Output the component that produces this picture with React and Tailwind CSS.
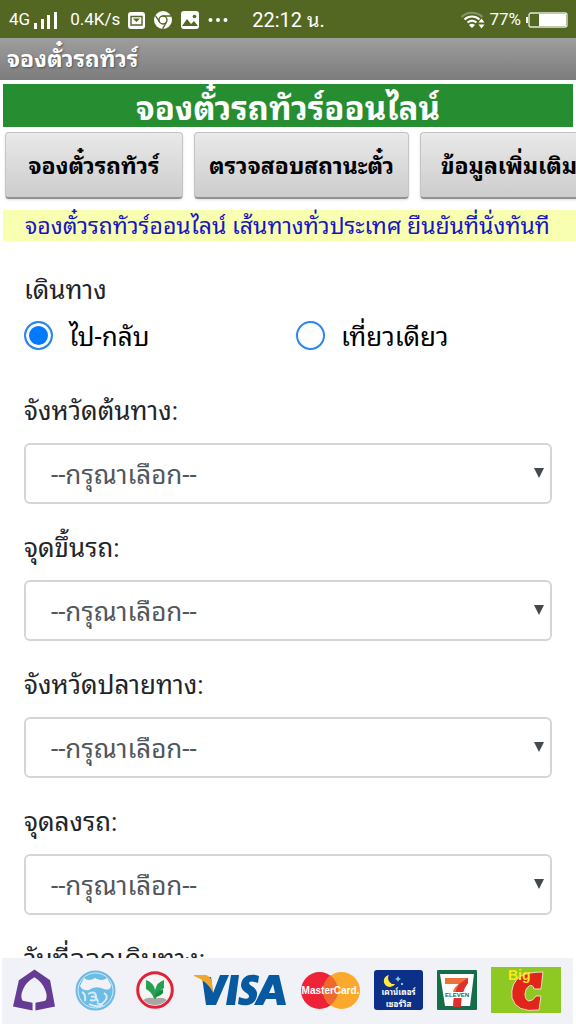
import React, { useState } from 'react';

// ── data ─────────────────────────────────────────────────────────────────────

const menu = [
  { label: 'จองตั๋วรถทัวร์', width: 'w-[178px]' },
  { label: 'ตรวจสอบสถานะตั๋ว', width: 'w-[215px]' },
  { label: 'ข้อมูลเพิ่มเติม', width: 'w-[178px]' },
];

const fields = [
  { id: 'origin', label: 'จังหวัดต้นทาง:' },
  { id: 'pickup', label: 'จุดขึ้นรถ:' },
  { id: 'destination', label: 'จังหวัดปลายทาง:' },
  { id: 'dropoff', label: 'จุดลงรถ:' },
];

const trips = [
  { id: 'round', label: 'ไป-กลับ' },
  { id: 'oneway', label: 'เที่ยวเดียว' },
];

// ── status bar ───────────────────────────────────────────────────────────────

const StatusBar = () => (
  <div className="flex h-[38px] shrink-0 items-center bg-[#536723] pl-[9px] pr-2 pt-0.5 text-[17px] text-white">
    <span className="text-[17px]">4G</span>
    <svg className="ml-1 h-[18px] w-6" viewBox="0 0 24 18" fill="#fff">
      <rect x="0" y="12" width="3" height="6" />
      <rect x="7" y="8" width="3" height="10" />
      <rect x="13" y="4" width="3" height="14" />
      <rect x="20" y="1" width="3" height="17" />
    </svg>
    <span className="ml-3">0.4K/s</span>
    <svg className="ml-2 size-[17px]" viewBox="0 0 17 17">
      <rect width="17" height="17" rx="3" fill="#fff" />
      <path d="M3 4.500h11v8.500H3z" fill="none" stroke="#536723" strokeWidth="1.4" />
      <path d="M5 6.500h7L8.500 10z" fill="#536723" />
    </svg>
    <svg className="ml-[9px] size-[18px]" viewBox="0 0 18 18">
      <circle cx="9" cy="9" r="9" fill="#fff" />
      <circle cx="9" cy="9" r="4" fill="none" stroke="#536723" strokeWidth="1.4" />
      <path d="M9 5h8M5.5 11L1.4 4.5M12.5 11L8.6 17.8" stroke="#536723" strokeWidth="1.4" />
    </svg>
    <svg className="ml-[9px] size-[18px]" viewBox="0 0 18 18">
      <rect width="18" height="18" rx="3" fill="#fff" />
      <path d="M1 15l5-7 4 5 3-3 4 5z" fill="#536723" />
      <circle cx="13.5" cy="5.5" r="1.8" fill="#536723" />
    </svg>
    <svg className="ml-[9px] h-1 w-5" viewBox="0 0 20 4" fill="#fff">
      <circle cx="2.5" cy="2" r="2" />
      <circle cx="10" cy="2" r="2" />
      <circle cx="17.5" cy="2" r="2" />
    </svg>
    <span className="ml-6 text-[20px]">22:12 น.</span>
    <svg className="ml-auto h-[18px] w-6" viewBox="0 0 24 18" fill="none" strokeWidth="2" stroke="#fff">
      <path d="M0.5 6a15 15 0 0 1 21 0" opacity=".3" />
      <path d="M3.5 8.5a11 11 0 0 1 15 0M6.5 11.5a7 7 0 0 1 9 0" />
      <path d="M8 14a4.500 4.500 0 0 1 6 0l-3 3z" fill="#fff" stroke="none" />
      <path d="M20.500 7.500l3 4h-6zM20.500 17.500l3-4h-6z" fill="#fff" stroke="none" />
    </svg>
    <span className="ml-1">77%</span>
    <svg className="ml-[5px] h-4 w-[42px]" viewBox="0 0 42 16">
      <rect x="0" y="5" width="2" height="6" fill="#fff" />
      <rect x="3" y="1" width="38" height="14" rx="2" fill="none" stroke="#e5e9da" strokeWidth="1.3" />
      <rect x="13" y="2" width="27" height="12" fill="#fff" />
    </svg>
  </div>
);

// ── payment partners ─────────────────────────────────────────────────────────

const Partners = () => (
  <footer className="ml-0.5 mr-[3px] flex h-[66px] shrink-0 items-center gap-5 bg-[#f0f2f7] pb-0.5 pl-[11px]">
    <div className="flex items-center gap-5">
      <svg className="h-[42px] w-[42px]" viewBox="0 0 43 42" role="img" aria-label="SCB">
        <path
          fillRule="evenodd"
          fill="#653b94"
          d="M22 0L38 11L43 38L23 42V34L33 32Q36 28 33 21Q30 13 22 8Q13 13 10 21Q7 28 10 32L20 34V42L0 38L6 11z"
        />
      </svg>
      <svg className="size-[41px]" viewBox="0 0 41 41" role="img" aria-label="Krungthai">
        <circle cx="20.500" cy="20.500" r="19" fill="#6dbce5" stroke="#6dbce5" strokeWidth="2" />
        <circle cx="20.500" cy="20.500" r="17.500" fill="none" stroke="#d5eaf6" strokeWidth="1" />
        <path d="M9 8Q14 12 20 8Q27 12 32 8L36 15Q36 21 29 19Q20 15 14 20Q7 21 5 16z" fill="#f0f2f7" />
        <path d="M7 22Q11 24 10 31M13 24q7-4 8 2t-6 4M16 27q5-2 7 5M29 23q5 3 1 8t-8 2M14 34q7 4 14 1" fill="none" stroke="#d8ecf7" strokeWidth="2" />
      </svg>
      <svg className="size-[38px]" viewBox="0 0 38 38" role="img" aria-label="Kasikorn">
        <circle cx="19" cy="19" r="17.300" fill="#f7f5f5" stroke="#df2438" strokeWidth="3" />
        <path d="M7 29Q13 25 19 28Q26 25 31 29Q26 34 19 34Q12 34 7 29z" fill="#aaa6a5" />
        <path d="M18 28Q16 21 10 18V9Q18 12 19 19Q21 11 28 9V17Q21 20 20 28z" fill="#27a052" />
        <path d="M19 24q2-4 8-6v4q-4 4-8 4z" fill="#168e3e" />
      </svg>
    </div>
    <div className="flex items-center gap-3.5">
      <svg className="h-10 w-[93px]" viewBox="0 0 93 40" role="img" aria-label="Visa">
        <g fill="#075a9f">
          <path d="M8 7h9l2 16L26 5h9L22 35H12z" />
          <path d="M37 5h8l-4 30h-9z" />
          <path d="M65 6l-1 7q-9-3-9 0c0 3 9 4 8 12c-1 10-11 12-19 9l1-7q10 4 10-1c0-3-8-4-8-11c1-10 10-12 18-9z" />
          <path fillRule="evenodd" d="M75 5h10l7 30h-9l-1-6H72l-3 6H60zM79 14l-4 9h6z" />
        </g>
        <path d="M0 5h12q5 1 6 8l1 9Q13 11 0 6z" fill="#f3a62c" />
      </svg>
      <svg className="h-[39px] w-[59px]" viewBox="0 0 59 39">
        <circle cx="18.500" cy="19.500" r="18.500" fill="#ee2338" />
        <circle cx="40.500" cy="19.500" r="18.500" fill="#fba92c" />
        <path d="M29.500 4.600a18.500 18.500 0 0 1 0 29.800a18.500 18.500 0 0 1 0-29.800" fill="#ed692e" />
        <text x="29.500" y="23" textAnchor="middle" fill="#fff" className="font-['Liberation_Sans',sans-serif] text-[10px] font-bold">MasterCard.</text>
      </svg>
      <svg className="h-10 w-[49px]" viewBox="0 0 49 40">
        <rect width="49" height="40" rx="3" fill="#0c2f87" />
        <path d="M15 5a6 6 0 1 0 6 9a6 6 0 0 1-6-9" fill="#ffeb3d" />
        <path d="M24 6l1 2 2 1-2 1-1 2-1-2-2-1 2-1zM27 13h2v2h-2z" fill="#87cce5" />
        <text x="24.500" y="25" textAnchor="middle" fill="#fff" className="text-[8px] font-bold">เคาน์เตอร์</text>
        <text x="24.500" y="37" textAnchor="middle" fill="#fff" className="text-[8px] font-bold">เซอร์วิส</text>
      </svg>
      <svg className="size-10" viewBox="0 0 40 40">
        <rect width="40" height="40" rx="1" fill="#146e49" />
        <path d="M3 4h34l-4 32H8z" fill="#fff" />
        <path d="M8 8h23v5q-7 7-7 9h-8q1-5 6-8H8z" fill="#ed713d" />
        <path d="M22 14L31 8v5q-7 9-7 24h-8q0-13 6-23z" fill="#de3030" />
        <rect x="7" y="22" width="26" height="6" fill="#fff" />
        <text x="20" y="27" textAnchor="middle" fill="#146e49" className="font-['Liberation_Sans',sans-serif] text-[6px] font-bold">ELEVEN</text>
      </svg>
      <svg className="h-[46px] w-[70px]" viewBox="0 0 70 46">
        <rect width="70" height="46" fill="#8dc922" />
        <path d="M52 5L50 22H43Q42 17 38 19Q34 22 34 27Q34 33 38 34Q42 34 45 29H50L48 43Q25 46 21 31Q19 16 30 9Q37 5 52 5z" fill="#e1251b" stroke="#e8e5bd" strokeWidth="1" />
        <text x="17" y="13" fill="#ffe51c" className="font-['Liberation_Sans',sans-serif] text-[14px] font-bold">Big</text>
      </svg>
    </div>
  </footer>
);

// ── page ─────────────────────────────────────────────────────────────────────

const SelectField = ({ id, label }) => (
  <div className="mb-[29px]">
    <label htmlFor={id} className="mb-[17px] block text-[26px] leading-[30px] text-[#212529]">
      {label}
    </label>
    <div className="relative">
      <select
        id={id}
        className="block h-[61px] w-full appearance-none rounded-md border-2 border-[#d3d5d8] bg-white pl-[25px] pr-10 pt-1 text-[26px] text-[#50565c]"
      >
        <option>--กรุณาเลือก--</option>
      </select>
      <svg className="pointer-events-none absolute right-2 top-[25px] h-[10px] w-[10px]" viewBox="0 0 10 10">
        <path d="M0 0h10L5 10z" fill="#44494e" />
      </svg>
    </div>
  </div>
);

const App = () => {
  const [trip, setTrip] = useState('round');

  return (
    <div className="flex h-screen flex-col overflow-hidden bg-white font-['Roboto','Noto_Sans_Thai_Looped','Loma','Garuda','Waree','Noto_Sans',sans-serif]">
      <StatusBar />
      <header className="flex h-[42px] shrink-0 items-center bg-gradient-to-b from-[#9e9e9e] to-[#7c7c7c] px-[7px] pt-0.5 text-[23px] font-bold text-white [text-shadow:1px_1px_2px_#555]">
        จองตั๋วรถทัวร์
      </header>

      <h1 className="mx-[3px] mt-1 flex h-[43px] shrink-0 items-center justify-center bg-[#268e31] pt-1.5 text-[33px] font-bold text-white">
        จองตั๋วรถทัวร์ออนไลน์
      </h1>

      <nav className="mt-[5px] flex shrink-0 gap-[11px] overflow-hidden pb-1 pl-[5px]">
        {menu.map(({ label, width }) => (
          <button
            key={label}
            type="button"
            className={`h-[67px] shrink-0 rounded-sm border border-b-2 border-[#c4c4c4] border-b-[#929292] bg-gradient-to-b from-[#e9e9e9] to-[#cdcdcd] pt-1 text-[23px] font-bold text-black shadow-sm ${width}`}
          >
            {label}
          </button>
        ))}
      </nav>

      <p className="ml-[3px] mt-[7px] flex h-[31px] shrink-0 items-center whitespace-nowrap bg-[#f9ffb1] pl-[22px] pt-1 text-[23px] text-[#1614c4]">
        จองตั๋วรถทัวร์ออนไลน์ เส้นทางทั่วประเทศ ยืนยันที่นั่งทันที
      </p>

      <form className="min-h-0 flex-1 overflow-hidden px-6 pt-[34px]">
        <fieldset className="mb-[45px]">
          <legend className="text-[26px] leading-[30px] text-[#212529]">เดินทาง</legend>
          <div className="mt-3.5 grid grid-cols-2 gap-x-4">
            {trips.map(({ id, label }) => (
              <label key={id} className="flex h-[32px] items-center gap-4 text-[26px] text-black">
                <input
                  type="radio"
                  name="trip"
                  checked={trip === id}
                  onChange={() => setTrip(id)}
                  className="size-[29px] shrink-0 appearance-none rounded-full border-2 border-[#2a87ee] bg-white checked:bg-[#007bff] checked:shadow-[inset_0_0_0_3px_white]"
                />
                <span className="pt-1">{label}</span>
              </label>
            ))}
          </div>
        </fieldset>

        {fields.map((field) => (
          <SelectField key={field.id} {...field} />
        ))}

        <label htmlFor="date" className="block text-[26px] leading-[30px] text-[#212529]">
          วันที่ออกเดินทาง:
        </label>
        <input id="date" className="mt-3 h-[61px] w-full rounded-md border-2 border-[#d3d5d8]" />
      </form>

      <Partners />
    </div>
  );
};

export default App;
